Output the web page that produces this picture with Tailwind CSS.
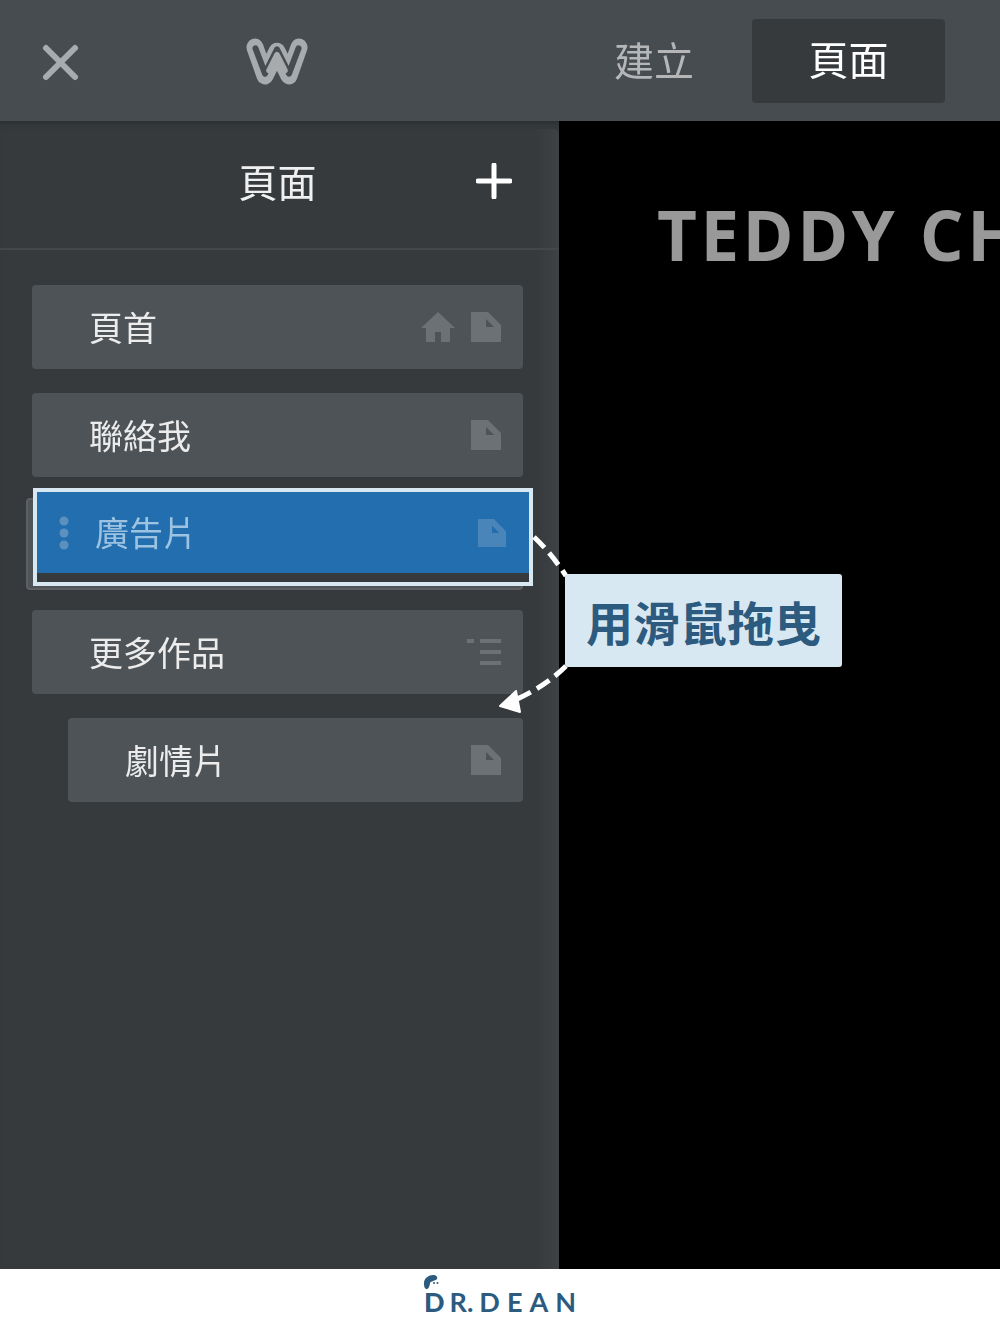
<!DOCTYPE html>
<html lang="zh-Hant"><head><meta charset="utf-8">
<script src="https://cdn.jsdelivr.net/npm/@tailwindcss/browser@4"></script>
</head>
<body class="m-0 bg-white">
<div class="relative w-[1000px] h-[1333px] overflow-hidden flex flex-col font-['Noto_Sans_CJK_TC','Noto_Sans',sans-serif]">
  <!-- top bar -->
  <header class="h-[121px] shrink-0 bg-[#474c50] flex items-center relative blur-[0.6px]">
    <div class="w-[246px] pl-[40px] flex items-center">
      <svg width="40" height="40" viewBox="0 0 40 40" class="mt-[4px]"><path d="M6 5 L35 34 M35 5 L6 34" stroke="#a9acae" stroke-width="6" stroke-linecap="round"/></svg>
    </div>
    <svg width="62" height="48" viewBox="0 0 62 46" preserveAspectRatio="none" class="mt-[3px]">
      <path d="M9 9 L19 36 L31 13 L43 36 L53 9" fill="none" stroke="#a8abad" stroke-width="17" stroke-linecap="round" stroke-linejoin="round"/>
      <path d="M9.500 10 L19 34 L31 11 L43 34 L52.500 10" fill="none" stroke="#474c50" stroke-width="6" stroke-linecap="round" stroke-linejoin="round"/>
      <path d="M23 31 L31 16 L39 31" fill="none" stroke="#a8abad" stroke-width="5.500" stroke-linecap="round" stroke-linejoin="round"/>
    </svg>
    <div class="flex-1"></div>
    <div class="text-[40px] leading-none text-[#b4b6b8] w-[80px] text-center pb-[4px]">建立</div>
    <div class="ml-[58px] mr-[55px] w-[193px] h-[84px] pb-[5px] rounded-[4px] bg-[#363a3d] text-white text-[40px] leading-none flex items-center justify-center">頁面</div>
  </header>
  <div class="flex-1 flex min-h-0">
    <!-- sidebar -->
    <aside class="relative w-[559px] shrink-0 bg-[#363a3d] flex flex-col shadow-[inset_0_8px_6px_-6px_#2b2e30] blur-[0.6px]">
      <div class="absolute right-0 top-[8px] bottom-0 w-[24px] rounded-tr-[6px] bg-gradient-to-r from-[#363a3d] to-[#3e4245]"></div>
      <div class="relative h-[129px] border-b-2 border-[#43474a] flex items-center justify-center">
        <span class="text-[39px] leading-none text-[#f0f0f0] -ml-[4px] -mt-[8px]">頁面</span>
        <svg class="absolute left-[476px] top-[42px]" width="36" height="36" viewBox="0 0 36 36"><path d="M18 2 V34 M2 18 H34" stroke="#fff" stroke-width="5" stroke-linecap="round"/></svg>
      </div>
      <div class="relative pt-[35px] pl-[32px] pr-[36px] flex flex-col gap-[24px]">
        <div class="h-[84px] rounded-[4px] bg-[#4e5357] flex items-center pl-[57px] pr-[22px] text-[34px] leading-none text-[#ececec]">
          <span class="flex-1 pb-[1px]">頁首</span>
          <svg width="34" height="30" viewBox="0 0 34 30" class="mr-[16px]"><path d="M17 0 L34 16 H29 V30 H20 V20 H14 V30 H5 V16 H0 Z" fill="#6c7175"/></svg>
          <svg width="30" height="30" viewBox="0 0 30 30"><path d="M0 0 H17 L30 13 V30 H0 Z" fill="#6c7175"/><path d="M15 7 L23 15 H15 Z" fill="#4e5357"/></svg>
        </div>
        <div class="h-[84px] rounded-[4px] bg-[#4e5357] flex items-center pl-[57px] pr-[22px] text-[34px] leading-none text-[#ececec]">
          <span class="flex-1 pb-[1px]">聯絡我</span>
          <svg width="30" height="30" viewBox="0 0 30 30"><path d="M0 0 H17 L30 13 V30 H0 Z" fill="#6c7175"/><path d="M15 7 L23 15 H15 Z" fill="#4e5357"/></svg>
        </div>
        <!-- placeholder slot behind the dragged row -->
        <div class="h-[85px]"></div>
        <div class="h-[84px] rounded-[4px] bg-[#4e5357] flex items-center pl-[57px] pr-[22px] text-[34px] leading-none text-[#ececec]">
          <span class="flex-1 pb-[1px]">更多作品</span>
          <svg width="34" height="26" viewBox="0 0 34 26"><path d="M0 2 H7 M13 2 H34 M13 13 H34 M13 24 H34" stroke="#6c7175" stroke-width="4"/></svg>
        </div>
        <div class="ml-[36px] h-[84px] rounded-[4px] bg-[#4e5357] flex items-center pl-[57px] pr-[22px] text-[34px] leading-none text-[#ececec]">
          <span class="flex-1 pb-[1px]">劇情片</span>
          <svg width="30" height="30" viewBox="0 0 30 30"><path d="M0 0 H17 L30 13 V30 H0 Z" fill="#6c7175"/><path d="M15 7 L23 15 H15 Z" fill="#4e5357"/></svg>
        </div>
      </div>
    </aside>
    <!-- canvas -->
    <main class="flex-1 bg-black overflow-hidden pl-[98px] pt-[65px] blur-[0.6px]">
      <div class="whitespace-nowrap font-['Open_Sans',sans-serif] font-bold text-[69px] leading-[96px] tracking-[3.500px] text-[#999999]">TEDDY CHEN</div>
    </main>
  </div>
  <!-- footer logo -->
  <footer class="h-[64px] shrink-0 bg-white relative flex justify-center">
    <div class="relative w-[154px] pt-[20px] pl-[1px] flex items-baseline font-['Lato',sans-serif] text-[#2c5b7f] leading-[26px]">
      <span class="text-[27px] font-black">D</span>
      <span class="text-[27px] font-bold ml-[5px]">R.</span>
      <span class="text-[27px] font-bold ml-[6px] tracking-[7px] whitespace-nowrap">DEAN</span>
      <svg class="absolute left-0 top-[6px]" width="17" height="16" viewBox="0 0 17 16"><path d="M1 8 C1 3 6 0 10 0 C13 0 15 2 14 4 C12 6 8 6 7 8 C7 11 5 15 3 14 C1 13 1 10 1 8 Z" fill="#2c5b7f"/><circle cx="11" cy="8" r="1" fill="#2c5b7f"/><circle cx="14.500" cy="8" r="1" fill="#2c5b7f"/></svg>
    </div>
  </footer>

  <!-- dragged row -->
  <div class="absolute left-[26px] top-[498px] w-[497px] h-[92px] rounded-[4px] bg-[#4e5357] border-2 border-[#5c6064]"></div>
  <div class="absolute left-[33px] top-[488px] w-[500px] h-[98px] border-[4px] border-[#d8e8f2] bg-[#363a3d]">
    <div class="h-[81px] bg-[#236eae] flex items-center pl-[22px] pr-[23px] text-[34px] leading-none text-[#9cc3e2] blur-[0.6px]">
      <svg width="12" height="34" viewBox="0 0 12 34" class="mr-[25px] -ml-[1px]"><circle cx="6" cy="5" r="4.500" fill="#5b90bf"/><circle cx="6" cy="17" r="4.500" fill="#5b90bf"/><circle cx="6" cy="29" r="4.500" fill="#5b90bf"/></svg>
      <span class="flex-1 pb-[1px]">廣告片</span>
      <svg width="28" height="30" viewBox="0 0 30 30"><path d="M0 0 H17 L30 13 V30 H0 Z" fill="#4a85ba"/><path d="M15 7 L23 15 H15 Z" fill="#236eae"/></svg>
    </div>
  </div>

  <!-- callout with dashed arrows -->
  <svg class="absolute left-[490px] top-[530px]" width="90" height="190" viewBox="0 0 90 190">
    <path d="M44 7 Q62 24 76 46" fill="none" stroke="#fff" stroke-width="5" stroke-dasharray="15 7"/>
    <path d="M76 136 Q56 156 25 170" fill="none" stroke="#fff" stroke-width="5" stroke-dasharray="15 7"/>
    <path d="M10 176 L26 161 L30 182 Z" fill="#fff" stroke="#fff" stroke-width="2" stroke-linejoin="round"/>
  </svg>
  <div class="absolute left-[565px] top-[574px] w-[277px] h-[93px] rounded-[3px] bg-[#d8e8f2] flex items-center justify-center text-[47px] font-bold leading-none text-[#2c5b7f]">用滑鼠拖曳</div>
</div>
</body></html>
